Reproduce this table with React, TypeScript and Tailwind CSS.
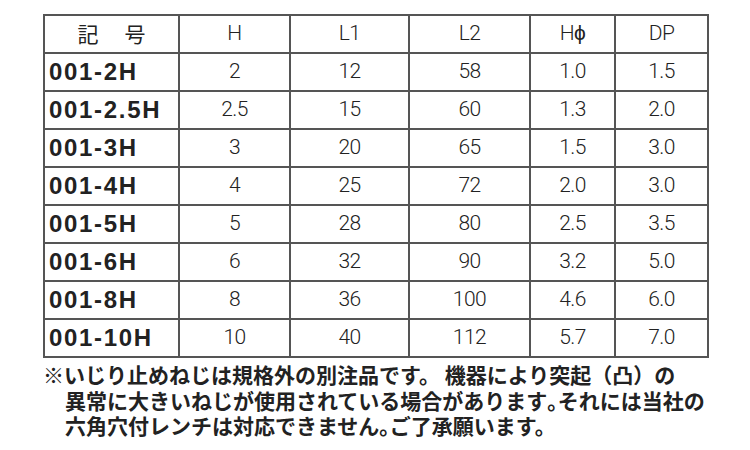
const headers = ['H', 'L1', 'L2', 'Hϕ', 'DP']

const rows: [string, string, string, string, string, string][] = [
  ['001-2H', '2', '12', '58', '1.0', '1.5'],
  ['001-2.5H', '2.5', '15', '60', '1.3', '2.0'],
  ['001-3H', '3', '20', '65', '1.5', '3.0'],
  ['001-4H', '4', '25', '72', '2.0', '3.0'],
  ['001-5H', '5', '28', '80', '2.5', '3.5'],
  ['001-6H', '6', '32', '90', '3.2', '5.0'],
  ['001-8H', '8', '36', '100', '4.6', '6.0'],
  ['001-10H', '10', '40', '112', '5.7', '7.0'],
]

const colWidths = ['w-[135px]', 'w-[111px]', 'w-[119px]', 'w-[121px]', 'w-[85px]', 'w-[93px]']

export default function App() {
  return (
    <div className="w-[750px] h-[450px] bg-white text-[#222] pt-[14px] pl-[43px]">
      <table className="border-collapse border-2 border-[#555] table-fixed">
        <thead>
          <tr className="h-[38px]">
            <th
              className={`${colWidths[0]} border-2 border-[#555] p-0 font-normal text-[21px] font-['Noto_Sans_CJK_JP',sans-serif]`}
            >
              記<span className="inline-block w-[26px]" />号
            </th>
            {headers.map((h, i) => (
              <th
                key={h}
                className={`${colWidths[i + 1]} border-2 border-[#555] p-0 font-light text-[21px] tracking-tight font-['Roboto',sans-serif]`}
              >
                {h}
              </th>
            ))}
          </tr>
        </thead>
        <tbody>
          {rows.map((r) => (
            <tr key={r[0]} className="h-[38px]">
              <td className="border-2 border-[#555] p-0 pl-[4px] font-bold text-[24px] tracking-[0.07em] whitespace-nowrap font-['Liberation_Sans',sans-serif]">
                {r[0]}
              </td>
              {r.slice(1).map((v, i) => (
                <td
                  key={i}
                  className="border-2 border-[#555] p-0 text-center font-light text-[21px] tracking-tight font-['Roboto',sans-serif]"
                >
                  {v}
                </td>
              ))}
            </tr>
          ))}
        </tbody>
      </table>
      <div className="mt-[4px] font-bold text-[21px] leading-[25.5px] font-['Noto_Sans_CJK_JP',sans-serif]">
        <p>※いじり止めねじは規格外の別注品です。 機器により突起（凸）の</p>
        <p className="pl-[22px]">異常に大きいねじが使用されている場合があります｡それには当社の</p>
        <p className="pl-[22px]">六角穴付レンチは対応できません｡ご了承願います。</p>
      </div>
    </div>
  )
}
